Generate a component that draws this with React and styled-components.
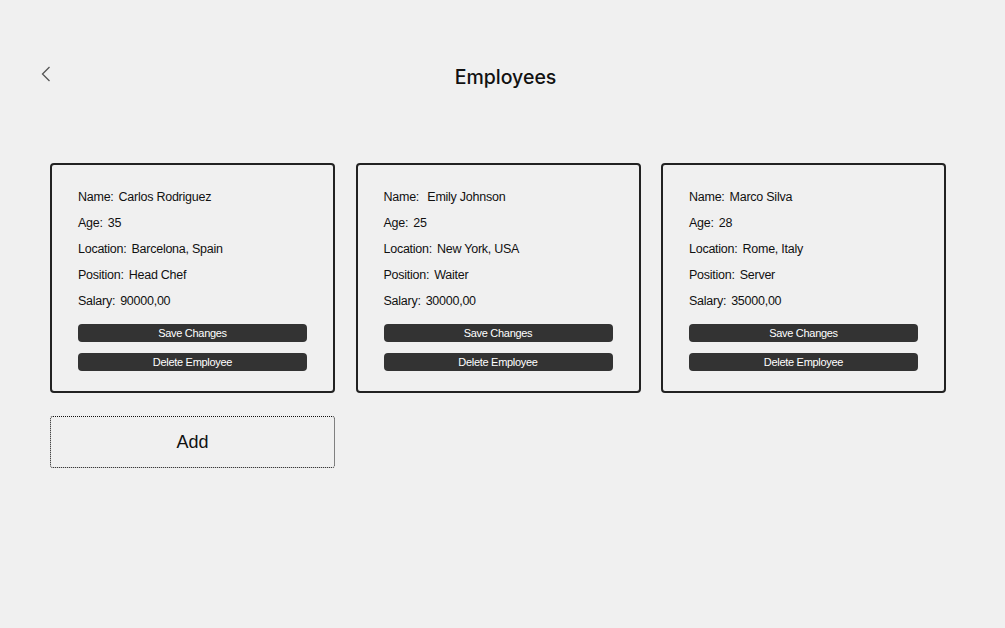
import React from "react";
import styled, { createGlobalStyle } from "styled-components";

const GlobalStyle = createGlobalStyle`
  html, body {
    margin: 0;
    padding: 0;
    background: #f0f0f0;
  }
  body {
    font-family: "Liberation Sans", Arial, sans-serif;
    color: #111;
  }
`;

const employees = [
  { name: "Carlos Rodriguez", age: 35, location: "Barcelona, Spain", position: "Head Chef", salary: "90000,00" },
  { name: "\u00a0Emily Johnson", age: 25, location: "New York, USA", position: "Waiter", salary: "30000,00" },
  { name: "Marco Silva", age: 28, location: "Rome, Italy", position: "Server", salary: "35000,00" },
];

const Page = styled.div`
  min-height: 812px;
  padding-top: 62px;
  box-sizing: border-box;
`;

const Header = styled.header`
  display: flex;
  align-items: center;
  padding: 0 45px 0 41px;
  height: 30px;
`;

const BackButton = styled.button`
  border: none;
  background: none;
  padding: 0;
  width: 10px;
  height: 30px;
  display: flex;
  align-items: center;
  margin-top: -6px;
  cursor: pointer;
`;

const Title = styled.h1`
  flex: 1;
  margin: 0;
  text-align: center;
  font-family: Inter, "Noto Sans", sans-serif;
  font-size: 19.5px;
  font-weight: 500;
  color: #111;
`;

const Grid = styled.div`
  display: grid;
  grid-template-columns: repeat(3, 285px);
  column-gap: 20.5px;
  row-gap: 23px;
  padding: 71px 0 0 50px;
`;

const Card = styled.div`
  border: 2px solid #222;
  border-radius: 4px;
  padding: 19px 26px 20px;
  display: flex;
  flex-direction: column;
`;

const Row = styled.div`
  height: 26px;
  line-height: 26px;
  font-size: 12.5px;
  letter-spacing: -0.25px;
  color: #111;
`;

const Value = styled.span`
  margin-left: 5px;
`;

const ActionButton = styled.button`
  height: 18px;
  border: none;
  border-radius: 4px;
  background: #333;
  color: #fff;
  font-family: "Liberation Sans", Arial, sans-serif;
  font-size: 11px;
  letter-spacing: -0.3px;
  padding: 0;
  margin-top: ${(p) => p.$gap}px;
  cursor: pointer;
`;

const AddCard = styled.button`
  height: 52px;
  border: 1.5px dotted #111;
  border-radius: 3px;
  background: transparent;
  font-family: "Liberation Sans", Arial, sans-serif;
  font-size: 18px;
  color: #111;
  cursor: pointer;
`;

const ChevronLeft = () => (
  <svg width="10" height="16" viewBox="0 0 10 16" fill="none">
    <path d="M8.5 1 L1.5 8 L8.5 15" stroke="#555" strokeWidth="1.3" />
  </svg>
);

const EmployeeCard = ({ e }) => (
  <Card>
    <Row>Name:<Value>{e.name}</Value></Row>
    <Row>Age:<Value>{e.age}</Value></Row>
    <Row>Location:<Value>{e.location}</Value></Row>
    <Row>Position:<Value>{e.position}</Value></Row>
    <Row>Salary:<Value>{e.salary}</Value></Row>
    <ActionButton $gap={10}>Save Changes</ActionButton>
    <ActionButton $gap={11}>Delete Employee</ActionButton>
  </Card>
);

export default function App() {
  return (
    <>
      <GlobalStyle />
      <Page>
        <Header>
          <BackButton aria-label="Back"><ChevronLeft /></BackButton>
          <Title>Employees</Title>
        </Header>
        <Grid>
          {employees.map((e) => (
            <EmployeeCard key={e.name} e={e} />
          ))}
          <AddCard>Add</AddCard>
        </Grid>
      </Page>
    </>
  );
}
